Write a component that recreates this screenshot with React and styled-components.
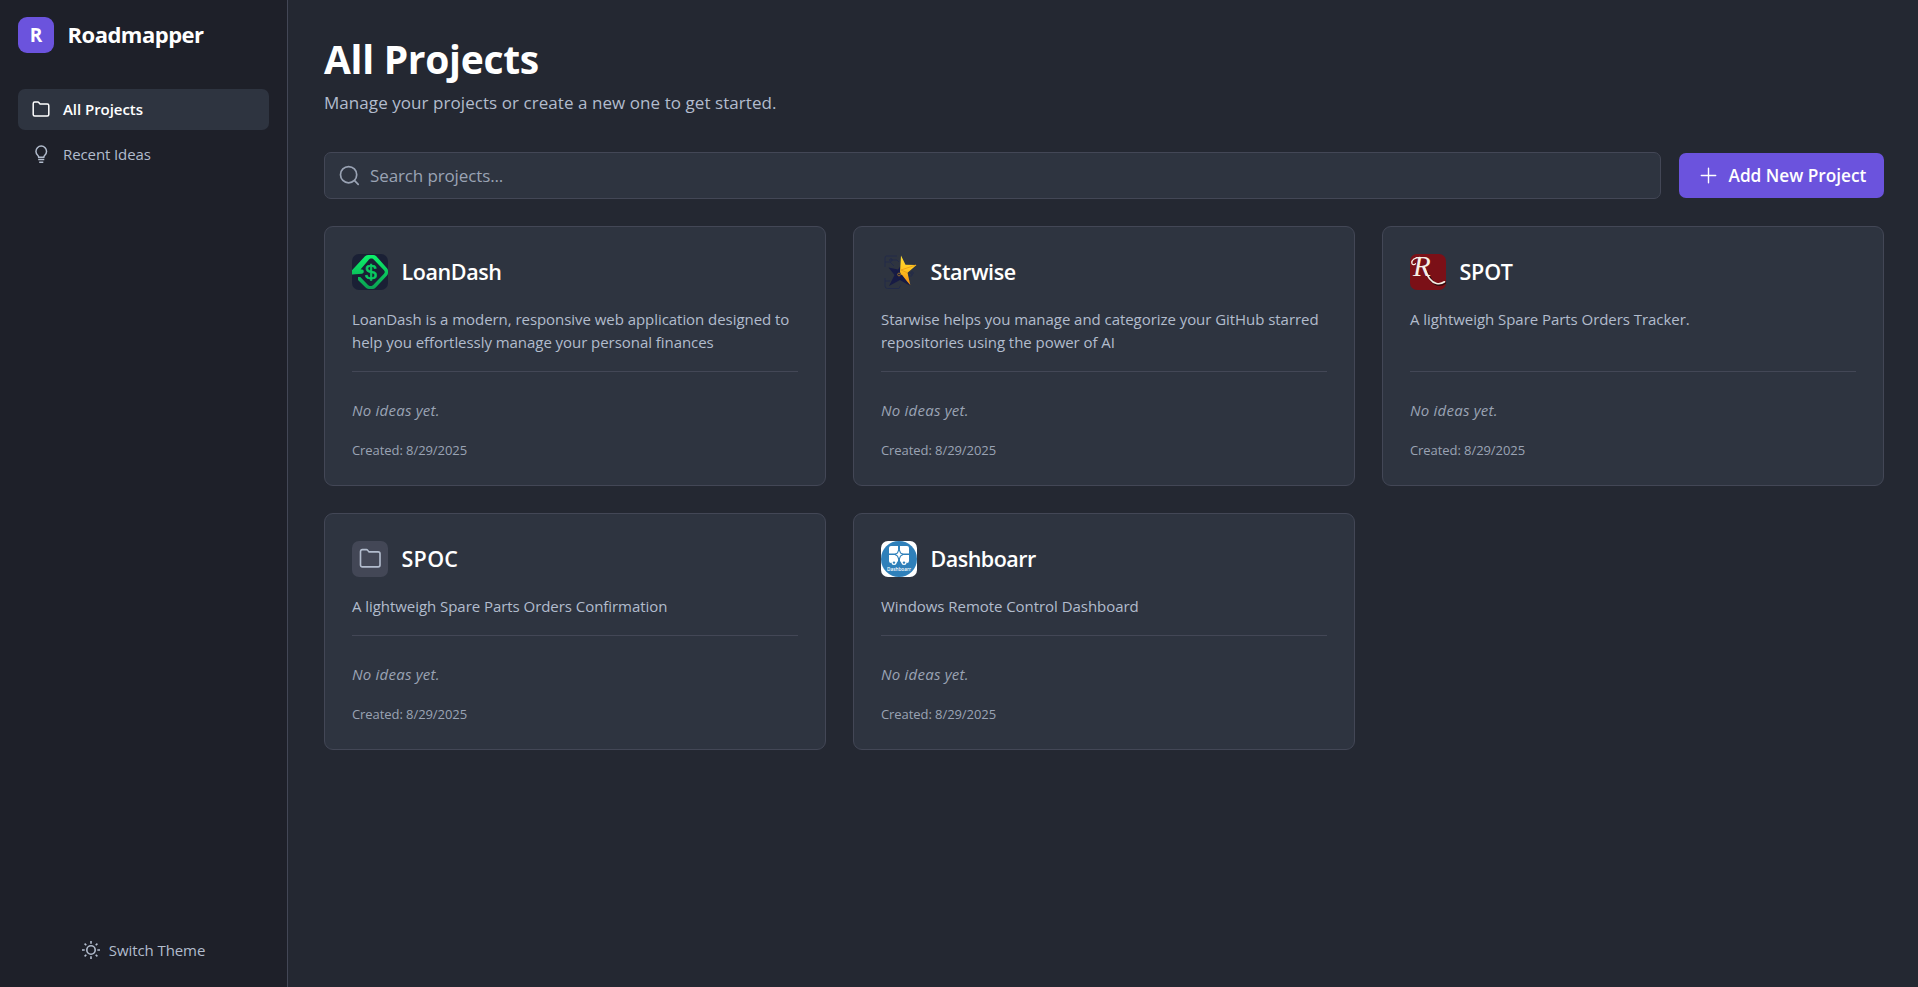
import React from "react";
import styled, { createGlobalStyle, ThemeProvider } from "styled-components";

const theme = {
  bg: "#242832",
  side: "#1e2029",
  card: "#2e3440",
  border: "#434756",
  tile: "#434756",
  accent: "#6b53dd",
  text: "#ffffff",
  soft: "#b2bccd",
  muted: "#9aa3b4",
};

const Global = createGlobalStyle`
  *, *::before, *::after { box-sizing: border-box; }
  body { margin: 0; background: ${theme.bg}; overflow: hidden; }
  h1, h2, p { margin: 0; }
  svg { display: block; flex: none; overflow: visible; }
`;

const Shell = styled.div`
  display: flex;
  height: 100vh;
  font-family: "Open Sans", "Noto Sans", sans-serif;
  color: ${(p) => p.theme.text};
`;

const Sidebar = styled.aside`
  display: flex;
  flex-direction: column;
  flex: none;
  width: 288px;
  padding: 17px 18px 16px;
  background: ${(p) => p.theme.side};
  border-right: 1px solid ${(p) => p.theme.border};
`;

const Brand = styled.div`
  display: flex;
  align-items: center;
  gap: 13.5px;
  margin-bottom: 36px;
`;

const BrandMark = styled.div`
  display: flex;
  align-items: center;
  justify-content: center;
  width: 36px;
  height: 36px;
  border-radius: 9px;
  background: ${(p) => p.theme.accent};
  font-size: 19px;
  font-weight: 700;
`;

const BrandName = styled.div`
  padding-bottom: 2px;
  font-size: 22px;
  line-height: 32px;
  font-weight: 700;
  letter-spacing: -0.5px;
  white-space: nowrap;
`;

const Nav = styled.nav`
  display: flex;
  flex-direction: column;
  gap: 4px;
  flex: 1;
`;

const NavItem = styled.a`
  display: flex;
  align-items: center;
  gap: 13.5px;
  height: 41px;
  padding: 0 13.5px 2px;
  border-radius: 7px;
  font-size: 15px;
  letter-spacing: ${(p) => (p.$active ? "-0.05px" : "-0.1px")};
  font-weight: ${(p) => (p.$active ? 600 : 400)};
  color: ${(p) => (p.$active ? p.theme.text : p.theme.soft)};
  background: ${(p) => (p.$active ? p.theme.card : "transparent")};
`;

const ThemeButton = styled.button`
  display: flex;
  align-items: center;
  justify-content: center;
  gap: 9px;
  height: 41px;
  padding: 0 0 2px;
  border: 0;
  background: none;
  font: 400 15px "Open Sans", sans-serif;
  letter-spacing: -0.08px;
  color: ${(p) => p.theme.soft};
`;

const Main = styled.main`
  flex: 1;
  min-width: 0;
  padding: 36px 34px 36px 36px;
  background: ${(p) => p.theme.bg};
`;

const Heading = styled.h1`
  font-size: 39px;
  line-height: 45px;
  font-weight: 700;
  letter-spacing: -0.3px;
`;

const Subtitle = styled.p`
  margin-top: 8px;
  font-size: 17px;
  line-height: 27px;
  letter-spacing: 0.06px;
  color: ${(p) => p.theme.soft};
`;

const Toolbar = styled.div`
  display: flex;
  align-items: center;
  gap: 18px;
  margin: 36px 0 27px;
`;

const SearchField = styled.label`
  display: flex;
  align-items: center;
  gap: 9px;
  flex: 1;
  height: 47px;
  padding: 0 13px;
  border: 1px solid ${(p) => p.theme.border};
  border-radius: 7px;
  background: ${(p) => p.theme.card};
  color: ${(p) => p.theme.muted};
`;

const SearchInput = styled.input`
  flex: 1;
  min-width: 0;
  padding: 0;
  border: 0;
  outline: 0;
  background: none;
  font: 400 17px "Open Sans", sans-serif;
  letter-spacing: -0.12px;
  color: ${(p) => p.theme.text};
  &::placeholder {
    color: ${(p) => p.theme.muted};
    opacity: 1;
  }
`;

const AddButton = styled.button`
  display: flex;
  align-items: center;
  gap: 8.5px;
  width: 205px;
  height: 45px;
  padding: 0 0 0 18px;
  border: 0;
  border-radius: 7px;
  background: ${(p) => p.theme.accent};
  color: ${(p) => p.theme.text};
  font: 600 17.25px "Open Sans", sans-serif;
  letter-spacing: -0.02px;
  white-space: nowrap;
`;

const Grid = styled.div`
  display: grid;
  grid-template-columns: repeat(3, minmax(0, 1fr));
  gap: 27px;
`;

const Card = styled.article`
  display: flex;
  flex-direction: column;
  padding: 27px;
  border: 1px solid ${(p) => p.theme.border};
  border-radius: 9px;
  background: ${(p) => p.theme.card};
`;

const CardHead = styled.div`
  display: flex;
  align-items: center;
  gap: 13.5px;
  margin-bottom: 18px;
`;

const Logo = styled.div`
  display: flex;
  align-items: center;
  justify-content: center;
  width: 36px;
  height: 36px;
  border-radius: 7px;
  background: ${(p) => p.$bg || "transparent"};
  color: ${(p) => p.theme.soft};
`;

const CardTitle = styled.h2`
  padding-bottom: 1px;
  font-size: 21.5px;
  line-height: 31px;
  font-weight: 600;
  letter-spacing: ${(p) => p.$track || "-0.4px"};
`;

const Description = styled.p`
  flex: 1;
  font-size: 15px;
  line-height: 22.5px;
  letter-spacing: -0.05px;
  color: ${(p) => p.theme.soft};
`;

const CardFoot = styled.div`
  margin-top: 18px;
  padding-top: 27px;
  border-top: 1px solid ${(p) => p.theme.border};
  color: ${(p) => p.theme.muted};
`;

const Empty = styled.p`
  font-size: 15px;
  line-height: 22.5px;
  letter-spacing: 0.23px;
  font-style: italic;
`;

const Created = styled.p`
  margin-top: 21px;
  font-size: 13px;
  line-height: 15px;
  letter-spacing: -0.07px;
`;

const FolderIcon = ({ size, w = 1.5 }) => (
  <svg width={size} height={size} viewBox="0 0 18 18" fill="none" stroke="currentColor" strokeWidth={w} strokeLinejoin="round">
    <path d="M1.2 3.7c0-1 .6-1.6 1.5-1.6h3.2c.5 0 .8.2 1.1.6l.9 1.2h7.4c.9 0 1.5.6 1.5 1.5v9c0 .9-.6 1.5-1.5 1.5H2.7c-.9 0-1.5-.6-1.5-1.5z" />
  </svg>
);

const BulbIcon = () => (
  <svg width="18" height="18" viewBox="0 0 18 18" fill="none" stroke="currentColor" strokeWidth="1.5">
    <path d="M6.7 12.2c0-.9-.4-1.3-1-1.9A5.3 5.3 0 1 1 12.8 10.3c-.6.6-1 1-1 1.900z" />
    <path d="M6.2 14.500h6.100M7.200 17.200h4.100" />
  </svg>
);

const SunIcon = () => (
  <svg width="18" height="18" viewBox="0 0 18 18" fill="none" stroke="currentColor" strokeWidth="1.6">
    <circle cx="9" cy="9" r="4.2" />
    <path d="M9 0v2.7M9 15.3V18M0 9h2.7M15.3 9H18M2.6 2.6l1.7 1.7M13.7 13.7l1.7 1.7M2.6 15.4l1.7-1.7M13.7 4.3l1.7-1.7" />
  </svg>
);

const SearchIcon = () => (
  <svg width="23" height="23" viewBox="0 0 23 23" fill="none" stroke="currentColor" strokeWidth="1.7" strokeLinecap="round">
    <circle cx="10.6" cy="10.7" r="8.1" />
    <path d="M16.6 16.7l3.6 3.6" />
  </svg>
);

const PlusIcon = () => (
  <svg width="23" height="23" viewBox="0 0 23 23" fill="none" stroke="currentColor" strokeWidth="1.4" strokeLinecap="round">
    <path d="M11.5 4.3v14.4M4.3 11.5h14.4" />
  </svg>
);

const LoanLogo = () => (
  <svg width="36" height="36" viewBox="0 0 36 36">
    <defs>
      <linearGradient id="loan" x1="0" y1="0" x2="0" y2="1">
        <stop offset="0" stopColor="#0cf26a" />
        <stop offset="1" stopColor="#0a9f52" />
      </linearGradient>
    </defs>
    <path fill="url(#loan)" d="M0 16.3 13 2.3Q14.6 1 16.5 1h4.6q1.9 0 3.2 1.3L35 14.2q1 1.2 1 2.5v2.4q0 1.3-1 2.5L24 33.3Q22.7 35 21 35h-4.4q-1.7 0-3-1.4L6 26v-3h2.3l7.7 8.1q.7.8 1.6.8h2q.9 0 1.6-.8L32 19.7q.8-.9.8-1.7t-.8-1.7L21.7 5.5Q20.9 4.600 20 4.600h-1.200q-1 0-1.800.8L8.500 15.500h1.500q1.800 0 1.800 2t-1.800 2.200L0 20.600z" />
    <text x="19" y="25" textAnchor="middle" fontFamily="Liberation Sans" fontSize="21" fill="#08cb62" stroke="#08cb62" strokeWidth=".6">$</text>
  </svg>
);

const StarLogo = () => (
  <svg width="36" height="36" viewBox="0 0 36 36" fill="none">
    <defs>
      <linearGradient id="star" x1="0" y1="0" x2="0" y2="1">
        <stop offset="0" stopColor="#ffdd32" />
        <stop offset=".5" stopColor="#ffc21f" />
        <stop offset="1" stopColor="#f28a12" />
      </linearGradient>
    </defs>
    <path stroke="#222a49" d="M16 2H5.500Q4 2 4 4v4h5l4 4M10 6h6l2 2M4 8v5M4 24v8q0 2.500 2.500 2.500H18l1.500-3M4 27h5M24 22h7v-2M23 25h5" />
    <circle cx="10" cy="6" r="1.300" stroke="#222a49" />
    <circle cx="31" cy="19" r="1.300" stroke="#222a49" />
    <path fill="#171b45" d="M19.500 12 17 15.500 7.500 13.500l6 7.500L8 32l11-6L29 31.500 19.500 22z" />
    <path fill="url(#star)" d="M20 1.500 24.500 10.800 35.500 11 26.500 18.800 29.300 31 20.500 21.500 19 18z" />
    <path stroke="#e99a17" strokeWidth=".8" d="m20 16 6.500 2.800M20 16l15-5" />
    <path fill="#171b45" d="m15.500 17.500 6 4L29 31.500l-12-7z" />
    <circle cx="18" cy="20.500" r="1.400" fill="#171b45" stroke="#d9951d" strokeWidth=".6" />
  </svg>
);

const SpotLogo = () => (
  <svg width="36" height="36" viewBox="0 0 36 36" fill="none" strokeLinecap="round">
    <path stroke="#30090d" strokeWidth="2.400" d="M17 18c2 5 5 11.500 10 12.500 3.200.7 6-.2 8-1.700" />
    <text x="3" y="22" fontFamily="Liberation Serif" fontStyle="italic" fontSize="29" fill="#f6efe6">R</text>
    <path stroke="#f6efe6" strokeWidth="1.700" d="M14 13.500c2 6 6 14.500 12.500 16 3.200.7 6-.2 8-1.700" />
    <path stroke="#f6efe6" strokeWidth="1.300" d="M10 3.300C5 3.300 1.500 6 1.800 9c.2 1.700 2.400 2.200 3.600.8" />
  </svg>
);

const DashLogo = () => (
  <svg width="36" height="36" viewBox="0 0 36 36">
    <circle cx="18" cy="18" r="18" fill="#2f80ba" />
    <g fill="#fff">
      <path d="M10 5h7v7.500H8V7q0-2 2-2zM19 5h7q2 0 2 2v5.500h-9z" />
      <path d="M8 14h9v6l-2 2.500-2-2.500-3 2Q8 22 8 20zM19 14h9v6q0 2-2 2l-3-2-2 2.500-2-2.500z" />
      <circle cx="13" cy="21.500" r="2.500" />
      <circle cx="23" cy="21.500" r="2.500" />
    </g>
    <path fill="#fff" stroke="#2f80ba" strokeWidth="1.100" d="m18 8 1.500 4 2.500 1.500-2.500 1.500L18 19l-1.500-4-2.500-1.500 2.500-1.500z" />
    <circle cx="13" cy="21.600" r="1.200" fill="#2f80ba" />
    <circle cx="23" cy="21.600" r="1.200" fill="#2f80ba" />
    <text x="18" y="29.700" textAnchor="middle" fontFamily="Open Sans" fontSize="4.700" fontWeight="600" fill="#fff">Dashboarr</text>
  </svg>
);

const projects = [
  { name: "LoanDash", bg: "#1a2035", logo: <LoanLogo />, text: "LoanDash is a modern, responsive web application designed to help you effortlessly manage your personal finances" },
  { name: "Starwise", logo: <StarLogo />, text: "Starwise helps you manage and categorize your GitHub starred repositories using the power of AI" },
  { name: "SPOT", track: "-0.2px", bg: "#7b1017", logo: <SpotLogo />, text: "A lightweigh Spare Parts Orders Tracker." },
  { name: "SPOC", track: "0.3px", bg: theme.tile, logo: <FolderIcon size={22.5} w={1.3} />, text: "A lightweigh Spare Parts Orders Confirmation" },
  { name: "Dashboarr", track: "-0.5px", bg: "#ffffff", logo: <DashLogo />, text: "Windows Remote Control Dashboard" },
];

export default function App() {
  return (
    <ThemeProvider theme={theme}>
      <Global />
      <Shell>
        <Sidebar>
          <Brand>
            <BrandMark>R</BrandMark>
            <BrandName>Roadmapper</BrandName>
          </Brand>
          <Nav>
            <NavItem $active><FolderIcon size={18} />All Projects</NavItem>
            <NavItem><BulbIcon />Recent Ideas</NavItem>
          </Nav>
          <ThemeButton><SunIcon />Switch Theme</ThemeButton>
        </Sidebar>
        <Main>
          <Heading>All Projects</Heading>
          <Subtitle>Manage your projects or create a new one to get started.</Subtitle>
          <Toolbar>
            <SearchField>
              <SearchIcon />
              <SearchInput placeholder="Search projects..." />
            </SearchField>
            <AddButton><PlusIcon />Add New Project</AddButton>
          </Toolbar>
          <Grid>
            {projects.map((p) => (
              <Card key={p.name}>
                <CardHead>
                  <Logo $bg={p.bg}>{p.logo}</Logo>
                  <CardTitle $track={p.track}>{p.name}</CardTitle>
                </CardHead>
                <Description>{p.text}</Description>
                <CardFoot>
                  <Empty>No ideas yet.</Empty>
                  <Created>Created: 8/29/2025</Created>
                </CardFoot>
              </Card>
            ))}
          </Grid>
        </Main>
      </Shell>
    </ThemeProvider>
  );
}
